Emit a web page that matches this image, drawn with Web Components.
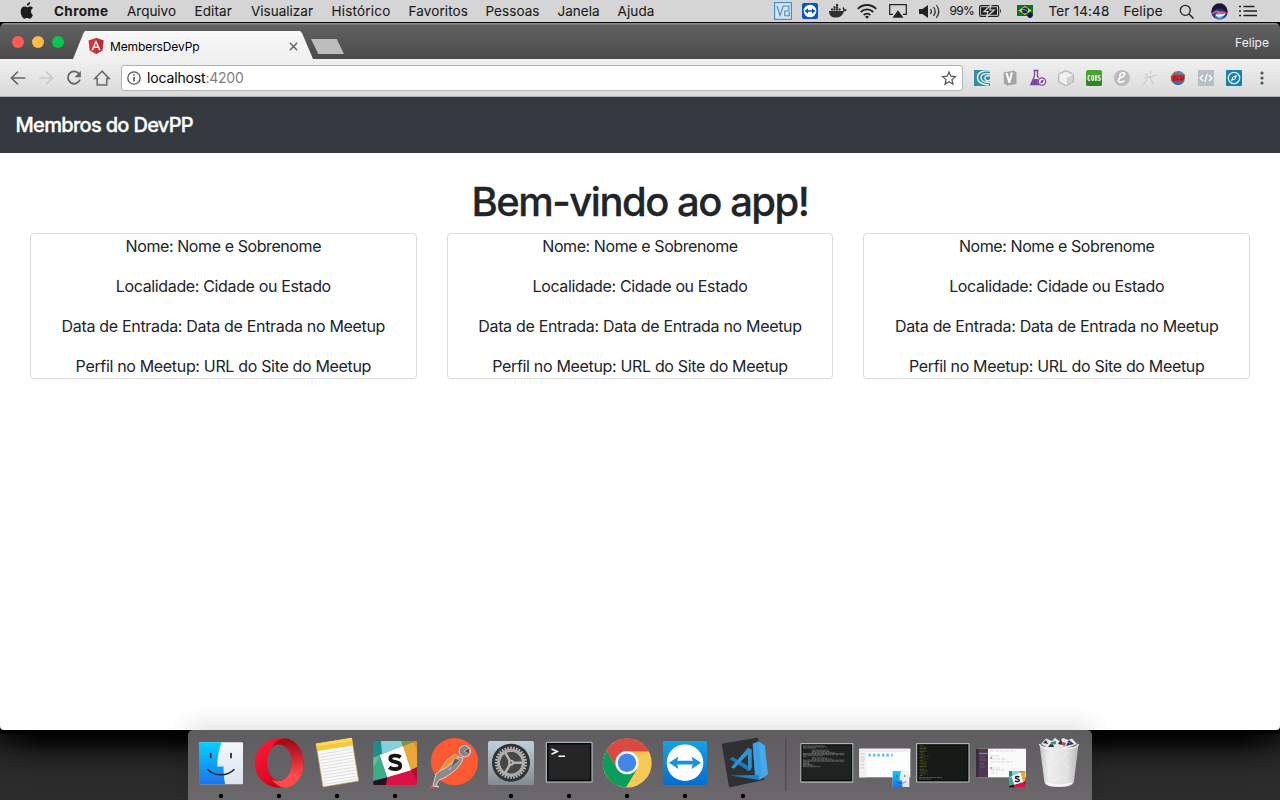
<!DOCTYPE html>
<html lang="pt-BR">
<head>
<meta charset="utf-8">
<title>MembersDevPp</title>
<style>
html,body{margin:0;width:1280px;height:800px;overflow:hidden;background:#2c2c2c;font-family:Inter,"Liberation Sans",sans-serif}
</style>
</head>
<body>
<mac-desktop></mac-desktop>
<script>
const define = (name, html) => customElements.define(name, class extends HTMLElement {
  constructor() {
    super();
    this.attachShadow({mode: 'open'}).innerHTML = html;
  }
});

/* One line of text tracked to a given advance width. */
customElements.define('ui-label', class extends HTMLElement {
  constructor() {
    super();
    this.attachShadow({mode: 'open'}).innerHTML = `<style>:host{display:inline-block;white-space:nowrap;flex:none}span{display:inline-block}</style><span><slot></slot></span>`;
  }
  connectedCallback() {
    const w = parseFloat(this.getAttribute('w'));
    const span = this.shadowRoot.querySelector('span');
    const n = this.textContent.length;
    const natural = span.getBoundingClientRect().width;
    span.style.letterSpacing = ((w - natural) / n) + 'px';
    this.style.width = w + 'px';
  }
});

const finder = `<linearGradient id="fb" x2="0" y2="1"><stop stop-color="#06d0fc"/><stop offset="1" stop-color="#1c74f0"/></linearGradient>
<linearGradient id="fw" x2="0" y2="1"><stop stop-color="#f4f5f8"/><stop offset="1" stop-color="#dbe6f0"/></linearGradient>
<rect x="7" y="12.3" width="44" height="42" rx="1.2" fill="url(#fw)"/>
<path d="M8.2 12.3H29.6C26.6 20 25.4 28 25.2 36.4H31.6C31.4 43 32 49 33.2 54.3H8.2Q7 54.3 7 53V13.5Q7 12.3 8.2 12.3Z" fill="url(#fb)"/>
<path d="M18.7 23.5v4M39 23.5v4" stroke="#18222f" stroke-width="1.7" stroke-linecap="round"/>
<path d="M15.8 39.5C22 46.5 35.8 46.5 42 39.5" fill="none" stroke="#142438" stroke-width="1.4" stroke-linecap="round"/>`;
const slack = `<clipPath id="sc"><rect x="7.3" y="11" width="43.7" height="44" rx="1.5"/></clipPath><g clip-path="url(#sc)">
<path d="M7 11H40L13.7 25Z" fill="#73c4b8"/><path d="M7 11L18 23L7 27Z" fill="#2f8f89"/><path d="M14 11H35L37 16L16 24Z" fill="#82d1dd"/><path d="M7 11H15L16 24L7 28Z" fill="#1f8d86"/><path d="M35 11H51V12L37 16Z" fill="#749a3c"/>
<path d="M37 16L51 11V39L45 40.3Z" fill="#e9a838"/><path d="M47 12H51V20Z" fill="#d99429"/>
<path d="M7 27L13.7 25L21.3 47.3L7 52Z" fill="#3aae88"/><path d="M7 38L14 26L7 28Z" fill="#5dbf9c"/>
<path d="M7 51L21.3 47.3L23 55H7Z" fill="#260f25"/><path d="M21.3 47.3L51 38V55H20Z" fill="#db1245"/><path d="M45 40L51 50V37Z" fill="#ae1035"/></g>
<path d="M13.7 25L37 16L45 40.3L21.3 47.3Z" fill="#fff"/><path d="M34.6 27.300C32 25.200 24.300 24.600 24.300 28.700C24.300 33.200 34.300 30.700 34.300 35.500C34.300 40.200 26 39.600 23.200 37.200" stroke="#151515" stroke-width="3.800" fill="none"/>`;

let teeth = '';
for (let i = 0; i < 32; i++) teeth += `<path d="M29 16.6v3.2" transform="rotate(${i * 11.25} 29 32.7)"/>`;
let rules = '';
for (let i = 0; i < 11; i++) rules += `<path d="M${9.8 + i * .45} ${24.6 + i * 3}l35-5.6"/>`;
let lines = '';
const lens = [24, 26, 14, 0, 18, 20, 26, 46, 46, 22, 4, 17, 23, 46, 46, 7, 7, 10, 13, 20];
lens.forEach((l, i) => { if (l) lines += `<path d="M${i > 3 && i < 7 || i > 10 && i < 13 ? 14 : 5} ${15.8 + i * 1.1}h${l * .9}" stroke-dasharray="${2 + i % 3} .6"/>`; });
let code = '';
for (let i = 0; i < 21; i++) code += `<path d="M${5.5 + (i % 2)} ${15.5 + i * 1.5}h${4 + (i * 7 % 5)}" stroke-dasharray="${1 + i % 3} 1"/>`;

const dockIcons = [
 [1, finder],
 [1, `<linearGradient id="o1" x2=".7" y2="1"><stop stop-color="#ff1b36"/><stop offset=".65" stop-color="#e50923"/><stop offset="1" stop-color="#a70014"/></linearGradient><linearGradient id="o2" x2="0" y2="1"><stop stop-color="#9f0710"/><stop offset=".35" stop-color="#c9212d"/><stop offset=".75" stop-color="#ff4b4b"/></linearGradient>
  <path fill-rule="evenodd" fill="url(#o1)" d="M29.2 8.3A24.5 24.7 0 1 0 29.2 57.7A24.5 24.7 0 1 0 29.2 8.3ZM29.6 14A12.4 18.5 0 1 1 29.6 51A12.4 18.5 0 1 1 29.6 14Z"/>
  <path fill="url(#o2)" d="M22 16.5C34-1 54 13 53.7 33C54 53 34 67 22 49.5C34 55.5 42 44 42 32.5C42 21 34 10.5 22 16.5Z"/>`],
 [1, `<path d="M8 13.7L43.7 8L50.7 51L15 57Z" fill="#fbfbfa" stroke="#b59a4a" stroke-width=".7"/><path d="M8 13.7L43.7 8L44.9 15.6L9.2 21Z" fill="#f6c63b"/><path d="M8 13.7L43.7 8L44.2 11L8.5 16.5Z" fill="#fcd65d"/><g stroke="#d7d7da" stroke-width=".8">${rules}</g>`],
 [1, slack],
 [0, `<circle cx="30.5" cy="31.7" r="23.6" fill="#fb5a33"/><path d="M5 57.5l8-5v5z" fill="#fb5a33"/>
  <path d="M15.5 41L23 30L31 24L35 27L25 39L20 42Z" fill="#f58b32" stroke="#f8d8c0" stroke-width=".8"/><path d="M35 27L39 28C37 38 27 43 22 47L15 50L12 55L15 57L9 56L12 44L16 41L23 37Z" fill="#8c898b" stroke="#e3dede" stroke-width=".9"/><path d="M31 28L36 30L25 40Z" fill="#5d5a5b" stroke="#e3dede" stroke-width=".6"/><circle cx="40.8" cy="21.2" r="5.7" fill="#858385" stroke="#e1dcdc" stroke-width="1"/><path d="M40 21L45.5 18V24.5Z" fill="#4b494a" stroke="#ddd" stroke-width=".6"/>`],
 [1, `<linearGradient id="g1" x2="0" y2="1"><stop stop-color="#bfd0d8"/><stop offset="1" stop-color="#858a90"/></linearGradient><rect x="6" y="11" width="46" height="44" rx="2" fill="url(#g1)"/><circle cx="29" cy="32.7" r="19" fill="#303235"/><g stroke="#b7b7b7" stroke-width="1.7">${teeth}</g><circle cx="29" cy="32.7" r="12.3" fill="none" stroke="#aaa" stroke-width="3.3"/><circle cx="29" cy="32.7" r="10.6" fill="#464749"/><path d="M29 32.7H41M29 32.7L23 22.3M29 32.7L23 43.1" stroke="#b2b2b2" stroke-width="2.5"/><circle cx="29" cy="32.7" r="3" fill="#bbb"/><circle cx="29" cy="32.7" r="1.4" fill="#77797a"/>`],
 [1, `<rect x="5.7" y="11.7" width="47" height="41" rx="1.5" fill="#a6b1b4"/><rect x="7" y="13" width="44.4" height="38.4" fill="#080808"/><rect x="8.5" y="14.5" width="41.4" height="35.2" fill="#252525"/><path d="M11.5 19l5.8 2.5-5.8 2.7M18.5 26.3h6.5" fill="none" stroke="#fff" stroke-width="1.5"/>`],
 [1, `<circle cx="29.2" cy="33" r="24.5" fill="#f9c956"/><path d="M29.2 21.4H51A24.5 24.5 0 0 0 8.5 20L19 38.5Z" fill="#db4a41"/><path d="M8.5 20A24.5 24.5 0 0 0 28 57.5L39.2 38.8L19 38.8Z" fill="#0b9d5c"/><path d="M29.2 21.4H51L40 27Z" fill="#e7b23f" opacity=".4"/><circle cx="29" cy="32.7" r="11.6" fill="#f5f7fa"/><circle cx="29" cy="32.7" r="9.2" fill="#4386ea"/>`],
 [1, `<linearGradient id="t1" x2="0" y2="1"><stop stop-color="#14a3e4"/><stop offset="1" stop-color="#056dd2"/></linearGradient><rect x="7" y="11" width="44" height="44" rx="2" fill="url(#t1)"/><circle cx="29" cy="32.7" r="18.3" fill="#fff"/><path d="M13 32.7L22.5 26.5L21.2 30.8H36.8L35.5 26.5L45 32.7L35.5 39L36.8 34.6H21.2L22.5 39Z" fill="#1393de"/>`],
 [1, `<path d="M9 13.5L42.7 7.8Q44 7.7 44.2 9L50 50L16 57.3Q15 57.5 14.8 56L8 15Q7.8 13.8 9 13.5Z" fill="#303033"/><path d="M38.7 13.7L44.5 11.5L50.8 15.2L54 44.3L45.3 50L16 45.5L41 45Z" fill="#1b82c7"/><path d="M44.5 11.5L50.8 15.2L54 44.3L45.3 50Z" fill="#48a9e6"/><path d="M38.7 13.7L44.5 11.5L48 46L41 45Z" fill="#3aa0e3"/><path d="M15.5 29L18.5 27L37 37.2V40L34.5 41Z" fill="#1b78bb"/><path d="M17 37.5L34 17.8L37.7 19.5V38L34.5 41L33.8 24.5L20 38.7Z" fill="#2e92d3"/>`],
 [2, `<path d="M.8 9V61" stroke="#474548"/>`],
 [0, `<rect x="2.3" y="13" width="53" height="39.7" rx="1" fill="#a9b9b6"/><rect x="3.4" y="14.2" width="50.8" height="37.2" fill="#090a0a"/><rect x="4.5" y="15.4" width="48.6" height="34.5" fill="#202121"/><g stroke="#8d8e8e" stroke-width=".55">${lines}</g>`],
 [0, `<rect x="3.3" y="18.7" width="51" height="28.6" fill="#fcfdfd"/><path d="M3.3 18.7h51v3.3h-51z" fill="#eeeeef"/><path d="M3.3 22h7v25.3h-7z" fill="#f1f1f2"/><path d="M5 24h4M5 27h3M5 29h4M5 31h3M5 35h3M5 38h3" stroke="#bbb" stroke-width=".7"/><g fill="#51bced"><path d="M12.500 23.8h2.300v2.800h-2.300zM17 23.8h2.300v2.800h-2.300zM21.500 23.8h2.300v2.800h-2.300zM26 23.8h2.300v2.800h-2.300zM30.500 23.8h2.300v2.800h-2.300zM35 23.8h1.500v2.800h-1.500z"/></g><g transform="translate(34 36.3) scale(.38)">${finder}</g>`],
 [0, `<rect x="2" y="13" width="53.6" height="39.5" rx="1" fill="#a9b9b6"/><rect x="3.2" y="14.2" width="51.2" height="37.2" fill="#090a0a"/><rect x="4.3" y="15.4" width="49" height="34.5" fill="#171917"/><g stroke="#5f641e" stroke-width=".75">${code}</g><path d="M5 47.5h23M5 49h12" stroke="#707b69" stroke-width=".6" stroke-dasharray="3 .6"/>`],
 [0, `<rect x="4" y="18.7" width="50" height="28.6" fill="#fafafb"/><path d="M4 18.7h12v28.6H4z" fill="#4f3751"/><path d="M4 18.7h2.5v28.6H4z" fill="#392c3c"/><path d="M7 23.5h9" stroke="#47999b" stroke-width="1.5"/><path d="M8 27h5M8 30h6M8 34h4M8 37h5" stroke="#8b708c" stroke-width=".6"/><path d="M18 21h26M18 26h9M19 29h15M19 32h22M19 38h10M19 40h13M19 43h6" stroke="#c8c5cb" stroke-width=".7" stroke-dasharray="4 1"/><path d="M18 38h2M18 28h2" stroke="#d54e68"/><g transform="translate(34.2 36.7) scale(.38)">${slack}</g>`],
 [0, `<linearGradient id="tr"><stop stop-color="#c6c6c6"/><stop offset=".25" stop-color="#ededed"/><stop offset=".7" stop-color="#e2e2e2"/><stop offset="1" stop-color="#b8b8b8"/></linearGradient><ellipse cx="29" cy="14.2" rx="19.5" ry="3.8" fill="#606264"/><path d="M11 14L16 8.5L22 11L25 7.7L29 11L33 8L38 10L42 8.5L47 14L38 18H18Z" fill="#e4e5e7"/><path d="M13 13l3-3 2 4zM18 17l4-5 2 5zM28 14l3-5 2 6zM36 16l3-6 5 4z" fill="#303236"/><path d="M21 12l5-1v3l-5 1z" fill="#249d88"/><path d="M32 12l4 1-2 4z" fill="#bf3745"/><path d="M37 11l4 1-1 3z" fill="#326dad"/>
  <path d="M9.5 14Q11 18.8 29 18.8Q47 18.8 48.5 14L43.8 52.5Q42 57 29 57Q16 57 14.5 52.5Z" fill="url(#tr)"/><path d="M9.5 14Q11 18.8 29 18.8Q47 18.8 48.5 14" fill="none" stroke="#fafafa" stroke-width="1.1"/><path d="M16 23l4 25M22 36l9-7 8 10M24 51l9-5M37 22l-4 7" stroke="#fff" stroke-opacity=".3" stroke-width="1.500" fill="none"/><path d="M16 53Q29 58 42 53" stroke="#fff" stroke-width="1.3" fill="none"/>`]
];

define('mac-dock', `<style>
:host{position:absolute;left:188px;top:730px;width:904px;height:70px;box-sizing:border-box;padding-left:4px;display:flex;border-radius:5px 5px 0 0;background:linear-gradient(#5f5c60,#6b686c);box-shadow:0 -3px 24px rgba(0,0,0,.14)}
svg{display:block;flex:none;overflow:visible}
</style>` + dockIcons.map(([kind, body], k) => `<svg width="${kind == 2 ? 26 : 58}" height="70" viewBox="0 0 ${kind == 2 ? 26 : 58} 70"${kind == 2 ? ' style="margin-left:12.5px;margin-right:-12.5px"' : ''}>${body}${kind == 1 ? '<circle cx="29" cy="66" r="2.2" fill="#080808"/>' : ''}</svg>`).join(''));

define('menu-bar', `<style>
:host{display:flex;align-items:center;height:22px;background:#d5d5d5;border-bottom:1px solid #050505;font-size:13.5px;line-height:22px;color:#1b1b1b;font-weight:400}
svg{display:block;flex:none;overflow:visible}
ui-label{-webkit-text-stroke:.1px #1b1b1b}
</style>
<svg style="margin-left:20px" width="14" height="18" viewBox="0 0 14 18"><path d="M10.2 0C10.3 1.9 8.7 3.7 6.8 3.8C6.6 2 8.3.3 10.2 0ZM12.9 12.9C12 15 10.8 16.7 9.6 16.7C8.6 16.7 8.2 16.1 7 16.1C5.8 16.1 5.4 16.7 4.4 16.7C2.8 16.7.7 13 .7 9.5C.7 6.5 2.5 4.6 4.5 4.6C5.6 4.6 6.4 5.3 7.2 5.3C7.9 5.3 9 4.5 10.3 4.5C11.3 4.5 12.4 5 13 6C10.2 7.6 10.6 11.5 12.9 12.9Z" fill="#1c1c1c"/></svg>
<ui-label w="54.5" style="margin-left:20px;font-weight:700">Chrome</ui-label>
<ui-label w="49" style="margin-left:18.5px">Arquivo</ui-label>
<ui-label w="37.5" style="margin-left:18.5px">Editar</ui-label>
<ui-label w="62" style="margin-left:19px">Visualizar</ui-label>
<ui-label w="59" style="margin-left:18.5px">Histórico</ui-label>
<ui-label w="59.5" style="margin-left:18px">Favoritos</ui-label>
<ui-label w="54" style="margin-left:17.5px">Pessoas</ui-label>
<ui-label w="42" style="margin-left:18px">Janela</ui-label>
<ui-label w="37" style="margin-left:18px">Ajuda</ui-label>
<svg style="margin-left:119px" width="18" height="18" viewBox="0 0 18 18"><rect x=".6" y=".6" width="16.8" height="16.8" fill="#d9e3eb" stroke="#3f8dcd" stroke-width="1.1"/><path d="M3 4l3 9.5L9.3 4h5.5v5h-4v4.7h4.5V10" fill="none" stroke="#3f8dcd" stroke-width="1.1"/></svg>
<svg style="margin-left:10px" width="16" height="16" viewBox="0 0 16 16"><rect width="16" height="16" rx="2" fill="#0b55c0"/><circle cx="8" cy="8" r="6.3" fill="#fff"/><path d="M2.5 8L6 5.2v2h4v-2L13.500 8L10 10.8v-2H6v2z" fill="#0b55c0"/></svg>
<svg style="margin-left:11px" width="18" height="14" viewBox="0 0 18 14"><path d="M0 7h14c.3-1.2 0-2.200-.5-3l.9-.9c.8.7 1.200 1.500 1.200 2.300.8-.1 1.600 0 2.200.4-.4 1.100-1.400 1.600-2.900 1.600C13.500 11.500 10.800 13.600 6.500 13.600 2 13.600 0 10.800 0 7zM2 4.500h2.100v2H2zM4.500 4.500h2.100v2H4.500zM7 4.500h2.100v2H7zM9.500 4.500h2.100v2H9.500zM4.500 2.200h2.100v2H4.500zM7 2.200h2.100v2H7zM7 0h2.100v1.900H7z" fill="#303030"/></svg>
<svg style="margin-left:10px" width="20" height="15" viewBox="0 0 20 15"><g fill="none" stroke="#202020" stroke-width="1.8"><path d="M.8 4.800a13 13 0 0 1 18.400 0M3.800 8a8.700 8.700 0 0 1 12.400 0M6.700 11a4.600 4.600 0 0 1 6.600 0"/></g><path d="M10 14.800l-2-2a2.900 2.900 0 0 1 4 0z" fill="#202020"/></svg>
<svg style="margin-left:12px" width="18" height="14" viewBox="0 0 18 14"><path d="M4 10.300H.7V.7h16.600v9.600H14" fill="none" stroke="#222" stroke-width="1.200"/><path d="M9 6.200L14.500 13.700h-11z" fill="#222"/></svg>
<svg style="margin-left:12px" width="21" height="15" viewBox="0 0 21 15"><path d="M0 5h3.500L9 1v13L3.500 10H0z" fill="#222"/><path d="M11.500 5q2 2.500 0 5M14.500 3q3.500 4.500 0 9M17.300 1q5 6.500 0 13" fill="none" stroke="#333" stroke-width="1.200"/></svg>
<ui-label w="24.500" style="margin-left:10px;font-size:12px">99%</ui-label>
<svg style="margin-left:4.500px" width="23" height="12" viewBox="0 0 23 12"><rect x=".6" y=".6" width="19" height="10.800" rx="1.500" fill="none" stroke="#222" stroke-width="1.200"/><path d="M2 2.200h16v7.600H2z" fill="#222"/><path d="M12 0L5 6.600h4L7.500 12L15.300 5h-4.400z" fill="#222" stroke="#d5d5d5" stroke-width="1.200"/><path d="M21 4q2 2 0 4z" fill="#222"/></svg>
<svg style="margin-left:15px" width="17" height="14" viewBox="0 0 17 14"><rect y="1" width="16" height="11" fill="#087129"/><path d="M8 2L14.700 6.500 8 11 1.300 6.500z" fill="#e9c923"/><circle cx="8" cy="6.500" r="3" fill="#122270"/><path d="M5.300 5.500q3-.5 5.300 2" stroke="#dce" stroke-width=".7" fill="none"/><circle cx="13" cy="11.300" r="2.600" fill="#101457"/></svg>
<ui-label w="61" style="margin-left:15px">Ter 14:48</ui-label>
<ui-label w="39.500" style="margin-left:14px">Felipe</ui-label>
<svg style="margin-left:15.500px" width="16" height="15" viewBox="0 0 16 15"><circle cx="6.300" cy="6.300" r="5" fill="none" stroke="#252525" stroke-width="1.300"/><path d="M10 10l4.500 4.500" stroke="#252525" stroke-width="1.600"/></svg>
<svg style="margin-left:16px" width="17" height="17" viewBox="0 0 17 17"><radialGradient id="si" cy=".75"><stop stop-color="#f4e8ff"/><stop offset=".3" stop-color="#49a9d5"/><stop offset=".65" stop-color="#3a3179"/><stop offset="1" stop-color="#171831"/></radialGradient><circle cx="8.500" cy="8.500" r="8.200" fill="url(#si)"/><path d="M1.500 11q4-5 7-1 3-2 7 .5" stroke="#e45cbd" stroke-width="1.300" fill="none"/><path d="M5 12q4 2 9-1" stroke="#fff" stroke-width="1.500" fill="none"/></svg>
<svg style="margin-left:11.500px" width="18" height="12" viewBox="0 0 18 12"><path d="M0 1.500h2M4.500 1.500h11M0 6h2M4.500 6H18M0 10.500h2M4.500 10.500H18" stroke="#222" stroke-width="1.700"/></svg>`);

define('tab-strip', `<style>
:host{display:flex;height:36px;background:linear-gradient(#8c8c8c 0 1px,#616161 2px,#4b4b4b);border-radius:5px 5px 0 0;align-items:flex-start}
svg{display:block;flex:none}
.lights{display:flex;gap:8px;padding:13px 0 0 12px}
.lights i{width:12px;height:12px;border-radius:50%}
.tab{margin:8px 0 0 9px;width:240px;height:28px;background:linear-gradient(#f8f8f8,#f0f0f0);clip-path:polygon(0 100%,10.500px 2px,12px 0,227px 0,229px 2px,240px 100%);display:flex;align-items:center;box-sizing:border-box;padding:2px 0 0 15px}
.tab ui-label{font-size:12px;color:#000;margin-left:6px}
.new{width:33px;height:15px;margin:16px 0 0 -2px;background:#bdbdbd;clip-path:polygon(0 0,78% 0,100% 100%,22% 100%)}
.user{margin:12px 11px 0 auto;color:#f2f2f2;font-size:12px;line-height:16px}
</style>
<div class="lights"><i style="background:#ff5b56"></i><i style="background:#fdb94c"></i><i style="background:#08c651"></i></div>
<div class="tab"><svg width="16" height="16" viewBox="0 0 16 16"><path d="M8 0L15.500 2.600 14.300 12.500 8 16 1.700 12.500.5 2.600z" fill="#dd3035"/><path d="M8 0L15.500 2.600 14.300 12.500 8 16z" fill="#bd2c32"/><path d="M8 1.900L3.300 12.200h1.800l.9-2.400h4l.9 2.400h1.800zM8 5.300l1.400 3.100H6.600z" fill="#fff"/></svg><ui-label w="89.500">MembersDevPp</ui-label><svg style="margin-left:89px" width="9" height="9" viewBox="0 0 9 9"><path d="M.8.8l7.400 7.400M8.200.8L.8 8.200" stroke="#666" stroke-width="1.500"/></svg></div>
<div class="new"></div><div class="user"><ui-label w="34">Felipe</ui-label></div>`);

define('browser-toolbar', `<style>
:host{display:flex;height:38px;box-sizing:border-box;align-items:center;background:linear-gradient(#f0f0f0,#dadada);border-bottom:1px solid #b0b0b0;padding-left:10px}
svg{display:block;flex:none;overflow:visible}
.url{box-sizing:border-box;width:842px;height:26px;background:#fff;border:1px solid #b3b3b3;border-radius:3px;margin-left:11px;display:flex;align-items:center;padding-left:5px;font-size:14px;color:#000}
.ext{display:flex;gap:12px;margin-left:11px}
</style>
<svg width="16" height="16" viewBox="0 0 16 16"><path d="M15.300 8H2M8 1.500L1.500 8 8 14.500" fill="none" stroke="#666" stroke-width="1.700"/></svg>
<svg style="margin-left:12px" width="16" height="16" viewBox="0 0 16 16"><path d="M1 8h13M8 1.500L14.500 8 8 14.500" fill="none" stroke="#c9c9c9" stroke-width="1.700"/></svg>
<svg style="margin-left:12px" width="16" height="16" viewBox="0 0 16 16"><path d="M13.200 4A6.200 6.200 0 1 0 14 9.500" fill="none" stroke="#666" stroke-width="1.800"/><path d="M14.800 1v6.300H8.500z" fill="#666"/></svg>
<svg style="margin-left:12px" width="16" height="16" viewBox="0 0 16 16"><path d="M8 1.200L.8 8.600h2.400v6.500h9.600V8.600h2.400z" fill="none" stroke="#666" stroke-width="1.500"/></svg>
<div class="url"><svg width="14" height="14" viewBox="0 0 14 14"><circle cx="7" cy="7" r="6.200" fill="none" stroke="#555" stroke-width="1.300"/><path d="M7 6v4.500M7 3.300v1.500" stroke="#555" stroke-width="1.600"/></svg><ui-label w="58.500" style="margin-left:6px">localhost</ui-label><ui-label w="38" style="color:#808080">:4200</ui-label><svg style="margin-left:698px" width="14" height="14" viewBox="0 0 14 14"><path d="M7 .9l1.800 4.300 4.600.4-3.500 3 1.100 4.600-4-2.500-4 2.500 1.100-4.600-3.500-3 4.600-.4z" fill="none" stroke="#555" stroke-width="1.200"/></svg></div>
<div class="ext">
<svg width="16" height="16" viewBox="0 0 16 16"><rect width="16" height="16" fill="#348da0"/><path d="M16 1Q4 0 3.500 7T15 15M16 4Q7 2.500 7 7.500T16 12.500M16 6q-6-1-5 2.500t5 1.500" fill="none" stroke="#e0f2f3" stroke-width="1.400"/></svg>
<svg width="16" height="16" viewBox="0 0 16 16"><path d="M1.500 2.500L12 .5l2.500 2V14L5 15.500 2 13.500z" fill="#a4a4a4"/><path d="M3.500 3l3 10h1.700L11 2.500H8.800L7.300 9 5.700 3z" fill="#fff"/></svg>
<svg width="16" height="16" viewBox="0 0 16 16"><path d="M3.500.5h5M4.500 1v5L.8 14.500h9M7.500 1v5l1 2" fill="none" stroke="#7a46a5" stroke-width="1.300"/><path d="M3.800 9h4v5.500h-7z" fill="#7a46a5"/><circle cx="12" cy="11.500" r="3.700" fill="#ece7f0" stroke="#7a46a5" stroke-width="1.200"/><path d="M14 9.500l-1.200 3L10 13.500l1.200-3z" fill="#7a46a5"/></svg>
<svg width="16" height="16" viewBox="0 0 16 16"><path d="M8 .7L15.300 4v8L8 15.500.7 12V4z" fill="#eee" stroke="#a5a5a5"/><path d="M8 7.200L15 4v8L8 15z" fill="#d3d3d3"/><path d="M1 4l7 3.200L15 4M8 7v8" stroke="#fafafa" fill="none"/></svg>
<svg width="16" height="16" viewBox="0 0 16 16"><rect width="16" height="16" rx="2" fill="#48a42e"/><path d="M0 10h16v4q0 2-2 2H2q-2 0-2-2z" fill="#318624"/><g fill="none" stroke="#fff" stroke-width="1"><path d="M4.300 5.700H2.200v4.600h2.100M5.800 5.700h1.700v4.600H5.800zM9.300 11V5.700h1.600v2.200H9.300l1.800 3M14.400 5.700h-1.900V8h1.600v2.300h-2"/></g></svg>
<svg width="16" height="16" viewBox="0 0 16 16"><circle cx="8" cy="8" r="8" fill="#bcbcbc"/><path d="M7.200 7.300C3 5.500 9 .8 10.600 3.600C11.200 6 7.500 7.500 7.200 7.300C2 9.800 4.700 14.300 10.500 10.600" fill="none" stroke="#fff" stroke-width="1.600"/></svg>
<svg width="16" height="16" viewBox="0 0 16 16"><path d="M8 7l1-6M8 7L3 4M8 7l6-2M8 7l3 7M8 7l-7 8M8 7l-6 1" stroke="#cbcbcb" stroke-width="1.200"/><path d="M7 6l5-3M7 8l-2 6" stroke="#f4f4f4"/></svg>
<svg width="16" height="16" viewBox="0 0 16 16"><circle cx="8" cy="8" r="7" fill="#38a95a"/><path d="M8 1a7 7 0 0 1 7 7l-7 0z" fill="#3998d0"/><path d="M2 11l12 0q-2 4-6 4t-6-4z" fill="#4765ba"/><path d="M2.500 4.500L6 2l3 1-2 3z" fill="#e04b50"/><path d="M.8 6.500L4 4.500 15 4.500l-1.500 6L2 12z" fill="#d42a37"/><path d="M4 6.500l-.7 4M4 6.500h2M3.600 8.500h2M3.300 10.500h2M7.500 6l-.7 4h2M11 6l-.7 4h2.500l.7-4" fill="none" stroke="#7a1524" stroke-width=".8"/></svg>
<svg width="16" height="16" viewBox="0 0 16 16"><rect width="16" height="16" fill="#b9bec6"/><path d="M5 5L2 8l3 3M11 5l3 3-3 3M9.200 4l-2.400 8" fill="none" stroke="#fff" stroke-width="1.300"/></svg>
<svg width="16" height="16" viewBox="0 0 16 16"><rect width="16" height="16" rx="1" fill="#1681b5"/><circle cx="8" cy="8" r="5.700" fill="none" stroke="#e4f4fc" stroke-width="1.300"/><path d="M11.300 4.700L9.300 9.300 4.700 11.300 6.700 6.700z" fill="#fff"/><circle cx="8" cy="8" r="1" fill="#1681b5"/></svg>
<svg width="16" height="16" viewBox="0 0 16 16"><g fill="#555"><circle cx="8" cy="3" r="1.600"/><circle cx="8" cy="8" r="1.600"/><circle cx="8" cy="13" r="1.600"/></g></svg>
</div>`);

define('member-card', `<style>
:host{display:block;box-sizing:border-box;border:1px solid #dadada;border-radius:4px;text-align:center;font-size:16px;line-height:24px;height:146px}
p{margin:0 0 16px;height:24px}
</style>
<p><ui-label w="195.500">Nome: Nome e Sobrenome</ui-label></p>
<p><ui-label w="215">Localidade: Cidade ou Estado</ui-label></p>
<p><ui-label w="323.500">Data de Entrada: Data de Entrada no Meetup</ui-label></p>
<p><ui-label w="295.500">Perfil no Meetup: URL do Site do Meetup</ui-label></p>`);

define('members-page', `<style>
:host{display:block;height:633px;background:#fff;color:#212529;border-radius:0 0 4px 4px}
nav{height:56px;background:#343a40;color:#fff;display:flex;align-items:center;padding-left:15.500px;font-size:20px;font-weight:500;-webkit-text-stroke:.35px #fff}
h1{margin:0;padding:25px 0 7px;text-align:center;font-size:40px;line-height:48px;height:48px;font-weight:500;-webkit-text-stroke:.3px #212529}
section{display:grid;grid-template-columns:repeat(3,1fr);gap:30px;padding:0 30px}
</style>
<nav><ui-label w="177.500">Membros do DevPP</ui-label></nav>
<h1><ui-label w="337">Bem-vindo ao app!</ui-label></h1>
<section><member-card></member-card><member-card></member-card><member-card></member-card></section>`);

define('mac-desktop', `<style>
:host{display:block;position:relative;width:1280px;height:800px;overflow:hidden;background:linear-gradient(90deg,rgba(45,45,45,.35),transparent 40px,transparent 1240px,rgba(45,45,45,.35)) 0 734px no-repeat,linear-gradient(#000 0 732px,#080808 742px,#1d1d1d 755px,#292929 772px,#2d2d2d)}
</style>
<menu-bar></menu-bar><tab-strip></tab-strip><browser-toolbar></browser-toolbar><members-page></members-page><mac-dock></mac-dock>`);
</script>
</body>
</html>
